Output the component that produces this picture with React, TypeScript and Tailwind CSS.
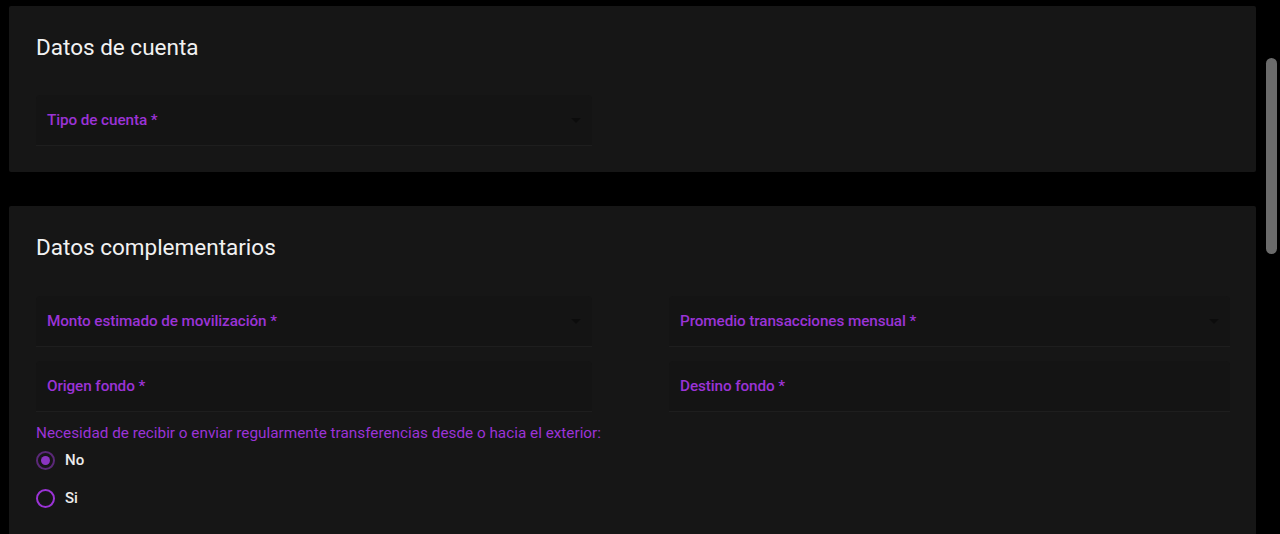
import React from "react";

const Field = ({ label, select }: { label: string; select?: boolean }) => (
  <div className="relative h-[51px] bg-[#141414] border-b border-[#1e1e1e] rounded-t-[4px] flex items-center px-[11px]">
    <span className="text-[15.3px] leading-5 text-[#9b33d6] font-medium tracking-[-0.1px]">{label}</span>
    {select && (
      <span className="absolute right-[11px] top-[23px] w-0 h-0 border-l-[5px] border-r-[5px] border-t-[5px] border-l-transparent border-r-transparent border-t-[#0c0c0c]" />
    )}
  </div>
);

const Radio = ({ label, checked }: { label: string; checked?: boolean }) => (
  <div className="flex items-center h-[38px] gap-[10px]">
    <span className={`w-[19px] h-[19px] rounded-full border-2 flex items-center justify-center ${checked ? "border-[#5a2878]" : "border-[#9b33d6]"}`}>
      {checked && <span className="w-[9px] h-[9px] rounded-full bg-[#8a35c0]" />}
    </span>
    <span className="text-[15px] text-[#ececec] font-medium">{label}</span>
  </div>
);

export default function App() {
  return (
    <div className="w-[1280px] h-[534px] bg-black overflow-hidden flex" style={{ fontFamily: "Roboto, 'Noto Sans', sans-serif" }}>
      <div className="flex-1 pl-[9px] pr-[6px] pt-[6px] flex flex-col gap-[34px]">
        <section className="bg-[#161616] rounded-[2px] pt-[25px] pb-[26px] pl-[27px] pr-[26px]">
          <h2 className="text-[22.5px] leading-8 text-[#f2f2f2] mb-[32px]">Datos de cuenta</h2>
          <div className="grid grid-cols-[556px_1fr] gap-x-[77px]">
            <Field label="Tipo de cuenta *" select />
          </div>
        </section>
        <section className="bg-[#161616] rounded-[2px] pt-[25px] pb-[30px] pl-[27px] pr-[26px] flex-1">
          <h2 className="text-[22.5px] leading-8 text-[#f2f2f2] mb-[33px]">Datos complementarios</h2>
          <div className="grid grid-cols-[556px_1fr] gap-x-[77px] gap-y-[14px]">
            <Field label="Monto estimado de movilización *" select />
            <Field label="Promedio transacciones mensual *" select />
            <Field label="Origen fondo *" />
            <Field label="Destino fondo *" />
          </div>
          <p className="mt-[11px] text-[15.3px] leading-5 text-[#9b33d6]">
            Necesidad de recibir o enviar regularmente transferencias desde o hacia el exterior:
          </p>
          <div className="mt-[-2px]">
            <Radio label="No" checked />
            <Radio label="Si" />
          </div>
        </section>
      </div>
      <div className="w-[18px] pt-[58px] flex justify-center">
        <div className="w-[11px] h-[196px] rounded-full bg-[#6b6b6b]" />
      </div>
    </div>
  );
}
